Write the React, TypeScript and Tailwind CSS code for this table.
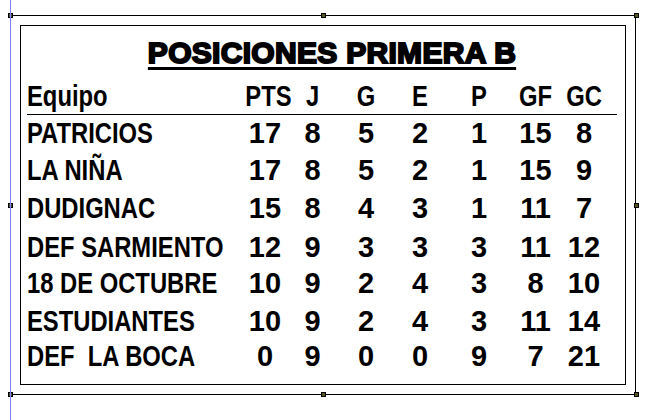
const narrow = "font-['Liberation_Sans',Arial,sans-serif] font-bold scale-x-[0.82]";
const wide = "font-['Liberation_Sans',Arial,sans-serif] font-bold";
const cols = "grid grid-cols-[214px_48px_47px_60px_48px_70px_43px_54px]";

const headers = ["PTS", "J", "G", "E", "P", "GF", "GC"];

const rows = [
  { team: "PATRICIOS", vals: ["17", "8", "5", "2", "1", "15", "8"], h: "h-[37px]" },
  { team: "LA NIÑA", vals: ["17", "8", "5", "2", "1", "15", "9"], h: "h-[38px]" },
  { team: "DUDIGNAC", vals: ["15", "8", "4", "3", "1", "11", "7"], h: "h-[39px]" },
  { team: "DEF SARMIENTO", vals: ["12", "9", "3", "3", "3", "11", "12"], h: "h-[36px]" },
  { team: "18 DE OCTUBRE", vals: ["10", "9", "2", "4", "3", "8", "10"], h: "h-[38px]" },
  { team: "ESTUDIANTES", vals: ["10", "9", "2", "4", "3", "11", "14"], h: "h-[35px]" },
  { team: "DEF\u00a0 LA BOCA", vals: ["0", "9", "0", "0", "9", "7", "21"], h: "h-[37px]" },
];

const handles = [
  "left-[8px] top-[13px]",
  "left-[321px] top-[13px]",
  "left-[634px] top-[13px]",
  "left-[8px] top-[203px]",
  "left-[634px] top-[203px]",
  "left-[8px] top-[392px]",
  "left-[321px] top-[392px]",
  "left-[634px] top-[392px]",
];

export default function App() {
  return (
    <div className="relative w-[650px] h-[420px] bg-white text-black overflow-hidden">
      <div className="pt-[15px] pl-[10px]">
        <div className="w-[626px] h-[380px] border border-black p-[9px]">
          <div className="w-[606px] h-[360px] border border-black">
            <div className="flex justify-center pl-[18px] mt-[12px] mb-[10px]">
              <h1
                className={`${wide} text-[30px] leading-[30px] tracking-[0.3px] underline decoration-[3px] underline-offset-[4px] [-webkit-text-stroke:2px_black]`}
              >
                POSICIONES PRIMERA B
              </h1>
            </div>

            <div className="ml-[6px] w-[590px]">
              <div className={`${cols} h-[37px] border-b border-black text-[29px] leading-[37px]`}>
                <span className={`${narrow} origin-left`}>Equipo</span>
                {headers.map((hd) => (
                  <span key={hd} className={`${narrow} origin-center text-center`}>
                    {hd}
                  </span>
                ))}
              </div>

              {rows.map((r) => (
                <div key={r.team} className={`${cols} ${r.h} text-[29px] leading-[37px]`}>
                  <span className={`${narrow} origin-left whitespace-pre`}>{r.team}</span>
                  {r.vals.map((v, i) => (
                    <span key={i} className={`${wide} text-center`}>
                      {v}
                    </span>
                  ))}
                </div>
              ))}
            </div>
          </div>
        </div>
      </div>

      {handles.map((pos) => (
        <span
          key={pos}
          className={`absolute ${pos} w-[5px] h-[5px] border border-black bg-[#55551c]`}
        />
      ))}
      <div className="absolute left-[10px] top-0 w-px h-full bg-[#8080ff]" />
    </div>
  );
}
